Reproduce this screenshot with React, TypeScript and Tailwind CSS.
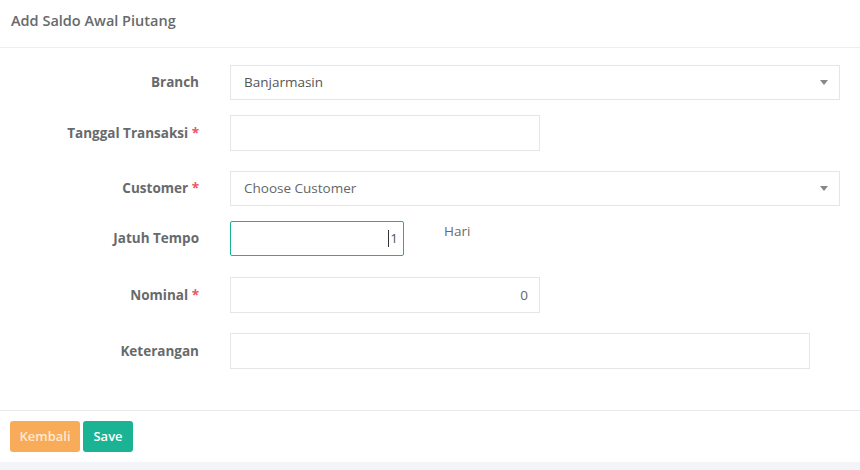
const FONT = "font-['Open_Sans',sans-serif]";

function Label({ text, required }: { text: string; required?: boolean }) {
  return (
    <div className="w-[200px] shrink-0 pr-px text-right text-[13.5px] font-bold text-[#676a6c]">
      {text}
      {required && <span className="text-[#ed5565]"> *</span>}
    </div>
  );
}

function Caret() {
  return (
    <svg width="8" height="5" viewBox="0 0 8 5" className="shrink-0">
      <path d="M0 0h8L4 5z" fill="#888" />
    </svg>
  );
}

export default function App() {
  return (
    <div className={`${FONT} flex h-[470px] w-[860px] flex-col bg-[#f3f4f8]`}>
      <div className="bg-white">
        <div className="flex h-[48px] items-center border-b border-[#eeeeee] px-[11px] pb-[3px] text-[14.5px] font-semibold text-[#676a6c]">
          <span className="-mt-[2px]">Add Saldo Awal Piutang</span>
        </div>

        <div className="flex flex-col pt-[17px] pb-[41px]">
          <div className="flex items-center">
            <Label text="Branch" />
            <div className="ml-[30px] flex h-[35px] w-[610px] items-center justify-between border border-[#e5e6e7] pl-[13px] pr-[11px] text-[13.5px] text-[#555]">
              <span>Banjarmasin</span>
              <Caret />
            </div>
          </div>

          <div className="mt-[15px] flex items-center">
            <Label text="Tanggal Transaksi" required />
            <div className="ml-[30px] h-[36px] w-[310px] border border-[#e5e6e7]" />
          </div>

          <div className="mt-[20px] flex items-center">
            <Label text="Customer" required />
            <div className="ml-[30px] flex h-[35px] w-[610px] items-center justify-between border border-[#e5e6e7] pl-[13px] pr-[11px] text-[13.5px] text-[#666]">
              <span>Choose Customer</span>
              <Caret />
            </div>
          </div>

          <div className="mt-[15px] flex items-start">
            <div className="flex h-[35px] items-center">
              <Label text="Jatuh Tempo" />
            </div>
            <div className="ml-[30px] flex h-[35px] w-[174px] items-center justify-end rounded-[2px] border border-[#1ab394] pr-[5px] text-[13.5px] text-[#555]">
              <span className="mr-px h-[17px] w-px bg-[#333]" />
              <span>1</span>
            </div>
            <div className="ml-[40px] text-[13.5px] text-[#676a6c]">Hari</div>
          </div>

          <div className="mt-[21px] flex items-center">
            <Label text="Nominal" required />
            <div className="ml-[30px] flex h-[36px] w-[310px] items-center justify-end border border-[#e5e6e7] pr-[11px] text-[13.5px] text-[#666]">
              0
            </div>
          </div>

          <div className="mt-[20px] flex items-center">
            <Label text="Keterangan" />
            <div className="ml-[30px] h-[36px] w-[580px] border border-[#e5e6e7]" />
          </div>
        </div>

        <div className="flex gap-[3px] border-t border-[#e7eaec] px-[10px] pt-[10px] pb-[10px]">
          <button className="h-[31px] w-[70px] rounded-[3px] bg-[#f8ac59] text-[13px] font-semibold text-[#fde9d3]">
            Kembali
          </button>
          <button className="h-[31px] w-[50px] rounded-[3px] bg-[#1ab394] text-[13px] font-semibold text-white">
            Save
          </button>
        </div>
      </div>
    </div>
  );
}
